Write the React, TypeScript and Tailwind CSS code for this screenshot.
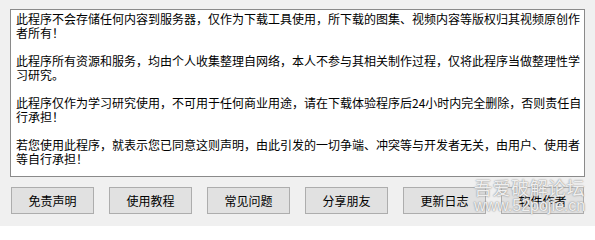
import React from "react";

const paragraphs: string[][] = [
  ["此程序不会存储任何内容到服务器，仅作为下载工具使用，所下载的图集、视频内容等版权归其视频原创作", "者所有！"],
  ["此程序所有资源和服务，均由个人收集整理自网络，本人不参与其相关制作过程，仅将此程序当做整理性学", "习研究。"],
  ["此程序仅作为学习研究使用，不可用于任何商业用途，请在下载体验程序后24小时内完全删除，否则责任自", "行承担！"],
  ["若您使用此程序，就表示您已同意这则声明，由此引发的一切争端、冲突等与开发者无关，由用户、使用者", "等自行承担！"],
];

const buttons = ["免责声明", "使用教程", "常见问题", "分享朋友", "更新日志", "软件作者"];

export default function App() {
  return (
    <div className="relative w-[595px] h-[226px] bg-[#f0f0f0] overflow-hidden font-['Noto_Sans_CJK_SC',sans-serif] text-black">
      {/* Disclaimer text box */}
      <div className="ml-[10px] mt-[9px] w-[575px] h-[168px] bg-white border border-[#8a8a8a] pl-[5px] pt-[2px]">
        {paragraphs.map((lines, i) => (
          <div key={i} className="mb-[14px] text-[12px] leading-[14px]">
            {lines.map((l, j) => (
              <div key={j} className="whitespace-nowrap">
                {l}
              </div>
            ))}
          </div>
        ))}
      </div>

      {/* Buttons */}
      <div className="flex gap-[15px] ml-[11px] mt-[10px]">
        {buttons.map((b) => (
          <button
            key={b}
            className="w-[83px] h-[27px] bg-[#e1e1e1] border border-[#adadad] text-[12px] leading-none flex items-center justify-center"
          >
            {b}
          </button>
        ))}
      </div>

      {/* Watermark */}
      <div className="absolute left-[474px] top-[176px] pointer-events-none select-none text-white/85 [text-shadow:0_0_1px_#8c8c8c,0_0_2px_#9a9a9a]">
        <div className="text-[18px] leading-[22px] tracking-[0.5px]">吾爱破解论坛</div>
        <div className="text-[16px] leading-[18px] font-['Liberation_Sans',sans-serif] -mt-[1px]">www.52pojie.cn</div>
      </div>
    </div>
  );
}
